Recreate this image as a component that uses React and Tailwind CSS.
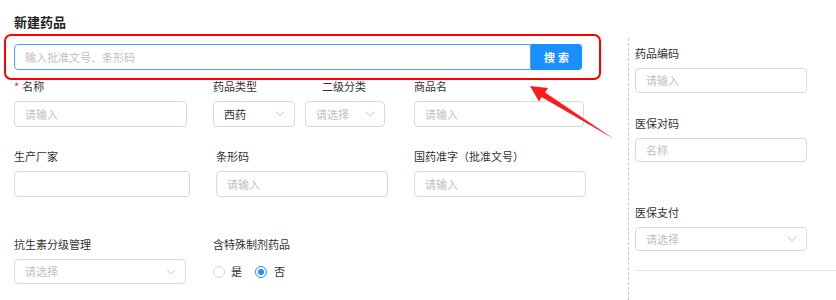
import React from "react";

const font = { fontFamily: '"Noto Sans CJK SC", "Noto Sans", sans-serif' };

function Chevron() {
  return (
    <svg width="10" height="6" viewBox="0 0 10 6" className="shrink-0">
      <path d="M1 0.8 L5 4.8 L9 0.8" fill="none" stroke="#c4c4c4" strokeWidth="1" />
    </svg>
  );
}

function Input({ w, h = 26, placeholder, className = "" }) {
  return (
    <div
      className={`flex items-center border border-[#d9d9d9] rounded-[4px] bg-white pl-[10px] text-[11px] text-[#bfbfbf] ${className}`}
      style={{ width: w, height: h }}
    >
      {placeholder}
    </div>
  );
}

function Select({ w, h = 26, value, placeholder, className = "" }) {
  return (
    <div
      className={`flex items-center justify-between border border-[#d9d9d9] rounded-[4px] bg-white pl-[10px] pr-[9px] text-[11px] ${className}`}
      style={{ width: w, height: h }}
    >
      <span className={value ? "text-[#333]" : "text-[#bfbfbf]"}>{value || placeholder}</span>
      <Chevron />
    </div>
  );
}

function Label({ children, className = "" }) {
  return <div className={`h-[18px] leading-[18px] text-[11px] text-[#333] ${className}`}>{children}</div>;
}

export default function App() {
  return (
    <div className="relative w-[836px] h-[300px] bg-white overflow-hidden" style={font}>
      <div className="flex h-full">
        <div className="w-[628px] shrink-0 pl-[14px]">
          <div className="pt-[13px] h-[31px] leading-[18px] text-[13px] font-bold text-[#222]">新建药品</div>
          <div className="mt-[13px] flex h-[26px]">
            <div className="w-[517px] h-full border border-[#40a9ff] rounded-l-[4px] flex items-center pl-[10px] text-[11px] text-[#bfbfbf]">
              输入批准文号、条形码
            </div>
            <div className="w-[51px] h-full bg-[#1890ff] rounded-r-[4px] flex items-center justify-center text-white text-[11px] font-bold tracking-[3px] pl-[3px]">
              搜索
            </div>
          </div>

          {/* Row 1 */}
          <div className="mt-[7px] flex">
            <Label className="w-[199px]">
              <span className="text-[#f5222d] mr-[3px]">*</span>名称
            </Label>
            <Label className="w-[109px]">药品类型</Label>
            <Label className="w-[92px]">二级分类</Label>
            <Label>商品名</Label>
          </div>
          <div className="mt-[6px] flex">
            <Input w={173} placeholder="请输入" />
            <Select w={82} value="西药" className="ml-[26px]" />
            <Select w={80} placeholder="请选择" className="ml-[10px]" />
            <Input w={170} placeholder="请输入" className="ml-[29px]" />
          </div>

          {/* Row 2 */}
          <div className="mt-[20px] flex">
            <Label className="w-[202px]">生产厂家</Label>
            <Label className="w-[198px]">条形码</Label>
            <Label>国药准字（批准文号）</Label>
          </div>
          <div className="mt-[6px] flex">
            <Input w={176} placeholder="" />
            <Input w={172} placeholder="请输入" className="ml-[26px]" />
            <Input w={172} placeholder="请输入" className="ml-[26px]" />
          </div>

          {/* Row 3 */}
          <div className="mt-[38px] flex">
            <Label className="w-[199px]">抗生素分级管理</Label>
            <Label>含特殊制剂药品</Label>
          </div>
          <div className="mt-[6px] flex items-center">
            <Select w={172} h={25} placeholder="请选择" />
            <div className="ml-[27px] flex items-center text-[11px] text-[#333]">
              <span className="w-[12px] h-[12px] rounded-full border border-[#d9d9d9] bg-white"></span>
              <span className="ml-[6px]">是</span>
              <span className="ml-[13px] w-[12px] h-[12px] rounded-full border border-[#1890ff] bg-white flex items-center justify-center">
                <span className="w-[6px] h-[6px] rounded-full bg-[#1890ff]"></span>
              </span>
              <span className="ml-[7px]">否</span>
            </div>
          </div>
        </div>

        {/* Right column */}
        <div className="flex-1 mt-[38px] border-l border-dashed border-[#c8c8c8] pl-[6px]">
          <Label className="mt-[6px]">药品编码</Label>
          <Input w={172} h={25} placeholder="请输入" className="mt-[6px]" />
          <Label className="mt-[21px]">医保对码</Label>
          <Input w={172} h={24} placeholder="名称" className="mt-[6px]" />
          <Label className="mt-[41px]">医保支付</Label>
          <Select w={172} h={24} placeholder="请选择" className="mt-[6px]" />
          <div className="mt-[19px] border-t border-[#e8e8e8]"></div>
        </div>
      </div>

      {/* Annotation overlay */}
      <div className="absolute left-[4px] top-[34px] w-[597px] h-[46px] border-2 border-[#ff0000] rounded-[7px] pointer-events-none"></div>
      <svg className="absolute left-0 top-0 pointer-events-none" width="836" height="300">
        <polygon
          points="530,86 548,88 545,92.5 614,139 541.5,97 539,101.5"
          fill="#ff1a1a"
        />
      </svg>
    </div>
  );
}
